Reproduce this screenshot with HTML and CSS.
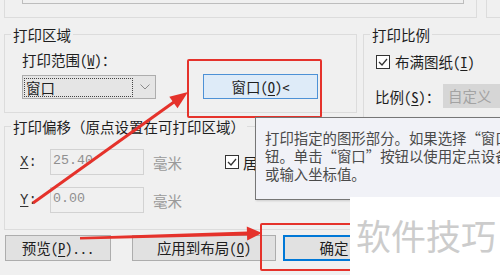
FILE: index.html
```html
<!DOCTYPE html>
<html lang="zh-CN">
<head>
<meta charset="utf-8">
<link rel="stylesheet" href="styles.css">
</head>
<body>
<div class="dialog">
  <div class="top-row">
    <div class="prev-group"><div class="prev-box"></div></div>
    <div class="prev-group2"></div>
  </div>
  <div class="main">
    <div class="left-col">
      <div class="group area">
        <div class="legend">打印区域</div>
        <div class="lbl">打印范围(<u>W</u>)：</div>
        <div class="area-row">
          <div class="combo">
            <span class="focus">窗口</span>
            <svg class="chev" width="10" height="6" viewBox="0 0 10 6"><polyline points="0.5,0.5 5,5 9.5,0.5" fill="none" stroke="#8a8a8a" stroke-width="1"/></svg>
          </div>
          <div class="btn win">窗口(<u>O</u>)&lt;</div>
        </div>
      </div>
      <div class="group offset">
        <div class="legend full">打印偏移（原点设置在可打印区域）</div>
        <div class="off-grid">
          <span class="xy"><u>X</u>:</span>
          <div class="field">25.40</div>
          <span class="unit">毫米</span>
          <span class="check"><svg width="12" height="12" viewBox="0 0 12 12"><polyline points="2,6 5,9 10,3" fill="none" stroke="#333" stroke-width="1.3"/></svg></span>
          <span class="chk-text">居中打印(<u>C</u>)</span>
          <span class="xy"><u>Y</u>:</span>
          <div class="field">0.00</div>
          <span class="unit">毫米</span>
        </div>
      </div>
    </div>
    <div class="right-col">
      <div class="group scale">
        <div class="legend">打印比例</div>
        <div class="chk-row">
          <span class="check"><svg width="12" height="12" viewBox="0 0 12 12"><polyline points="2,6 5,9 10,3" fill="none" stroke="#333" stroke-width="1.3"/></svg></span>
          <span>布满图纸(<u>I</u>)</span>
        </div>
        <div class="ratio-row">
          <span class="ratio-lbl">比例(<u>S</u>)：</span>
          <div class="ratio-field">自定义</div>
        </div>
      </div>
    </div>
  </div>
  <div class="buttons">
    <div class="btn preview">预览(<u>P</u>)...</div>
    <div class="btn apply">应用到布局(<u>O</u>)</div>
    <div class="btn ok">确定</div>
  </div>

  <div class="redbox box1"></div>
  <div class="redbox box2"></div>
  <svg class="arrows" width="500" height="275" viewBox="0 0 500 275">
    <line x1="33" y1="203" x2="174" y2="102" stroke="#e5322b" stroke-width="3"/>
    <polygon points="188,92 177.5,108.2 169.3,96.8" fill="#e5322b"/>
    <polygon points="80,237 248,231.5 248,235.5 80,239.5" fill="#e5322b"/>
    <polygon points="262,233 246.8,226.4 247.2,240.4" fill="#e5322b"/>
  </svg>
  <div class="tooltip">
    <div>打印指定的图形部分。如果选择“窗口”按</div>
    <div>钮。单击“窗口”按钮以使用定点设备指定</div>
    <div>或输入坐标值。</div>
  </div>
  <div class="watermark">软件技巧</div>
</div>
</body>
</html>
```

FILE: styles.css
```css
* { box-sizing: border-box; }
html, body { margin: 0; padding: 0; }
body {
  width: 500px;
  height: 275px;
  overflow: hidden;
  background: #f0f0f0;
  font-family: "Noto Sans CJK SC", sans-serif;
  font-size: 14.5px;
  color: #1e1e1e;
  font-feature-settings: "hwid" 1;
}
.dialog { position: relative; width: 500px; height: 275px; overflow: hidden; }
u { text-decoration-thickness: 1px; text-underline-offset: 2px; }

.top-row { display: flex; height: 18px; }
.prev-group { margin-left: 4px; width: 473px; height: 18px; border: 1px solid #dcdcdc; border-top: none; flex: none; }
.prev-box { margin-left: 17px; width: 442px; height: 4px; border: 1px solid #bdbdbd; border-top: none; }
.prev-group2 { margin-left: 9px; flex: 1; height: 18px; border-left: 1px solid #dcdcdc; border-bottom: 1px solid #dcdcdc; }

.main { display: flex; align-items: flex-start; margin-top: 16px; }
.left-col { margin-left: 4px; width: 353px; flex: none; }
.right-col { margin-left: 6px; width: 160px; flex: none; }

.group { border: 1px solid #dcdcdc; }
.legend { width: fit-content; line-height: 18px; padding: 0 2px; background: #f0f0f0; margin-top: -9px; white-space: nowrap; }
.legend.full { font-feature-settings: normal; }

.area { height: 79px; padding-left: 17px; }
.area .legend { margin-left: -11px; }
.lbl { line-height: 18px; margin-top: 7px; }
.area-row { display: flex; align-items: flex-end; margin-top: 5px; }
.combo { width: 134px; height: 24px; border: 1px solid #adadad; background: #e5e5e5; display: flex; align-items: center; padding: 0 5px 0 1px; flex: none; }
.focus { width: 109px; height: 19px; border: 1px dotted #444; line-height: 17px; padding-left: 1px; }
.chev { margin-left: auto; }

.btn { height: 26px; border: 1px solid #adadad; background: #e1e1e1; display: flex; align-items: center; justify-content: center; line-height: 18px; white-space: nowrap; flex: none; }
.win { margin-left: 47px; width: 115px; height: 25px; border-color: #4d91d6; background: #deebf8; }

.offset { margin-top: 13px; height: 104px; padding-left: 14px; }
.offset .legend { margin-left: -8px; }
.off-grid { display: grid; grid-template-columns: 31px 94px 81px 18px auto; grid-auto-rows: 26px; row-gap: 12px; align-items: center; margin-top: 13px; }
.xy { font-family: "Liberation Mono", monospace; font-size: 14px; color: #333; padding-left: 1px; }
.field { height: 26px; border: 1px solid #d2d2d2; background: #f0f0f0; font-family: "Liberation Mono", monospace; font-size: 13.3px; color: #8f8f8f; line-height: 22px; padding-left: 2px; }
.unit { color: #9a9a9a; padding-left: 9px; }
.check { width: 14px; height: 14px; border: 1px solid #333; background: #fff; display: flex; align-items: center; justify-content: center; }
.chk-text { padding-left: 0; }

.scale { height: 196px; padding-left: 11px; }
.scale .legend { margin-left: -5px; }
.chk-row { display: flex; align-items: center; line-height: 18px; margin-top: 9px; }
.chk-row .check { margin-left: 1px; margin-right: 5px; }
.ratio-row { display: flex; align-items: center; margin-top: 13px; height: 24px; }
.ratio-lbl { width: 68px; flex: none; }
.ratio-field { width: 90px; height: 24px; background: #d6d6d6; color: #a3a3a3; line-height: 24px; padding-left: 5px; flex: none; }

.buttons { display: flex; margin-top: 5px; }
.preview { margin-left: 5px; width: 106px; }
.apply { margin-left: 21px; width: 144px; }
.ok { margin-left: 7px; width: 102px; border: 2px solid #0078d7; }

.redbox { position: absolute; border: 2px solid #e5322b; border-radius: 2px; }
.box1 { left: 187px; top: 59px; width: 135px; height: 59px; }
.box2 { left: 260px; top: 223px; width: 150px; height: 48px; }
.arrows { position: absolute; left: 0; top: 0; }

.tooltip { position: absolute; left: 255px; top: 117px; width: 260px; height: 83px; border: 1px solid #767676; background: #f1f2f7; padding: 11px 0 0 9px; font-size: 14.4px; line-height: 18px; color: #4a4a4a; white-space: nowrap; box-shadow: 1px 1px 2px rgba(0,0,0,0.15); }
.watermark { position: absolute; left: 350px; top: 197px; width: 150px; height: 78px; background: #fff; font-size: 35px; line-height: 35px; color: #cccccc; padding: 20px 0 0 6px; white-space: nowrap; }
```
